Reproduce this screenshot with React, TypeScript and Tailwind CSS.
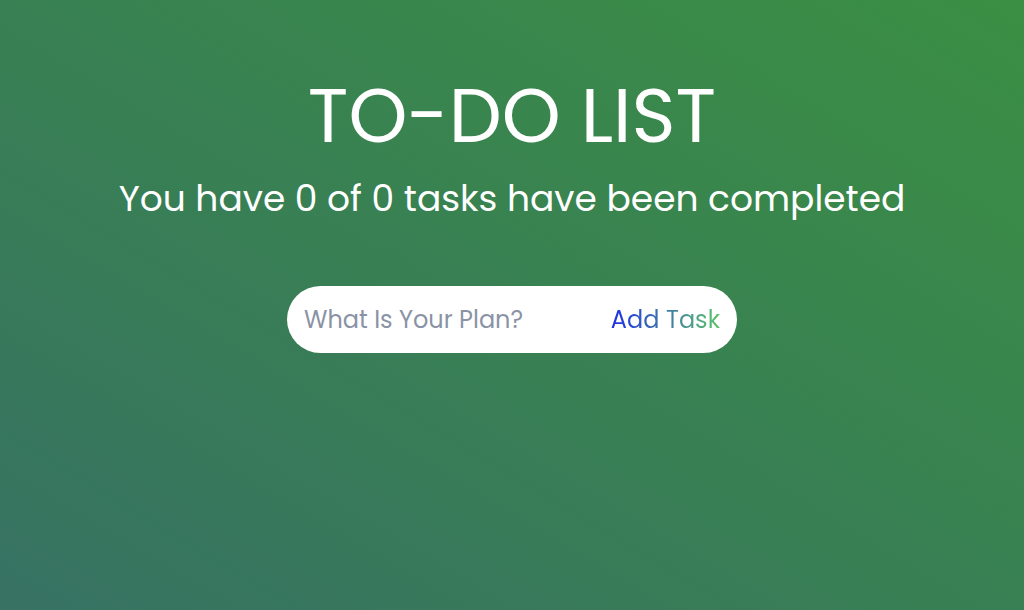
import React from "react";

export default function App() {
  return (
    <div
      className="w-full h-[610px] flex flex-col items-center bg-[linear-gradient(to_top_right,#377263,#3a8f43)] text-white"
      style={{ fontFamily: '"Poppins", "Open Sans", "Noto Sans", sans-serif' }}
    >
      <h1 className="mt-[72px] text-[75px] leading-[88px] font-normal">TO-DO LIST</h1>
      <p className="mt-[16px] text-[36px] leading-[46px] font-normal">You have 0 of 0 tasks have been completed</p>
      <div className="mt-[64px] w-[450px] h-[67px] bg-white rounded-full flex items-center pl-[17px] pr-[17px]">
        <input
          className="flex-1 min-w-0 outline-none bg-transparent text-[24px] text-[#6b7280] placeholder:text-[#8a93a6]"
          placeholder="What Is Your Plan?"
        />
        <button className="whitespace-nowrap text-[24px] bg-[linear-gradient(to_right,#1d2fe6,#5cc46a)] bg-clip-text text-transparent">
          Add Task
        </button>
      </div>
    </div>
  );
}
